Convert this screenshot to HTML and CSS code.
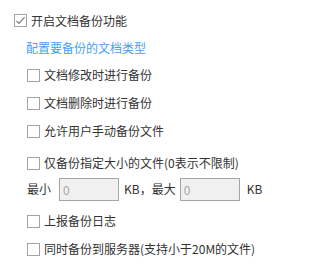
FILE: index.html
```html
<!DOCTYPE html>
<html>
<head>
	<meta charset="utf-8">
	<link rel="stylesheet" href="styles.css">
</head>
<body>
	<div class="panel">
		<label class="row main">
			<span class="box checked">
				<svg width="11" height="11" viewBox="0 0 11 11"><path d="M1.5 5.8 L4 8.3 L9.6 2.2" fill="none" stroke="#7a7a7a" stroke-width="1.2"/></svg>
			</span>
			<span class="txt">开启文档备份功能</span>
		</label>
		<div class="title">配置要备份的文档类型</div>
		<ul class="opts">
			<li class="row"><span class="box"></span><span class="txt">文档修改时进行备份</span></li>
			<li class="row"><span class="box"></span><span class="txt">文档删除时进行备份</span></li>
			<li class="row"><span class="box"></span><span class="txt">允许用户手动备份文件</span></li>
			<li class="row gap"><span class="box"></span><span class="txt">仅备份指定大小的文件(0表示不限制)</span></li>
			<li class="size">
				<span>最小</span>
				<input type="text" class="num first" value="0"/>
				<span class="mid">KB，最大</span>
				<input type="text" class="num" value="0"/>
				<span class="unit">KB</span>
			</li>
			<li class="row gap2"><span class="box"></span><span class="txt">上报备份日志</span></li>
			<li class="row"><span class="box"></span><span class="txt">同时备份到服务器(支持小于20M的文件)</span></li>
		</ul>
	</div>
</body>
</html>
```

FILE: styles.css
```css
body {
	margin: 0;
	background: #fff;
	font-family: "Noto Sans CJK SC", "Microsoft YaHei", sans-serif;
	font-size: 12px;
	color: #333;
}

.panel {
	padding: 7px 0 0 14px;
}

.row {
	display: flex;
	align-items: center;
	height: 28px;
	line-height: 1;
}

.main {
	height: 27px;
}

.box {
	box-sizing: border-box;
	width: 13px;
	height: 13px;
	border: 1px solid #a3a3a3;
	background: #fff;
	flex: none;
	display: flex;
	align-items: center;
	justify-content: center;
}

.box svg {
	display: block;
}

.txt {
	margin-left: 4px;
}

.title {
	height: 27px;
	line-height: 27px;
	padding-left: 12px;
	color: #4a9df2;
}

ul.opts {
	list-style-type: none;
	margin: 0;
	padding: 0 0 0 13px;
}

.opts .gap {
	margin-top: 4px;
}

.opts .gap2 {
	margin-top: 6px;
}

.size {
	display: flex;
	align-items: center;
	height: 24px;
	line-height: 1;
}

.num {
	box-sizing: border-box;
	width: 60px;
	height: 23px;
	margin: 0;
	padding: 0 3px;
	border: 1px solid #a5a5a5;
	background: #f0f0f0;
	color: #a8a8a8;
	font-family: inherit;
	font-size: 12px;
	outline: none;
}

.num.first {
	margin-left: 8px;
}

.mid {
	margin: 0 4px 0 5px;
}

.unit {
	margin-left: 7px;
}
```
